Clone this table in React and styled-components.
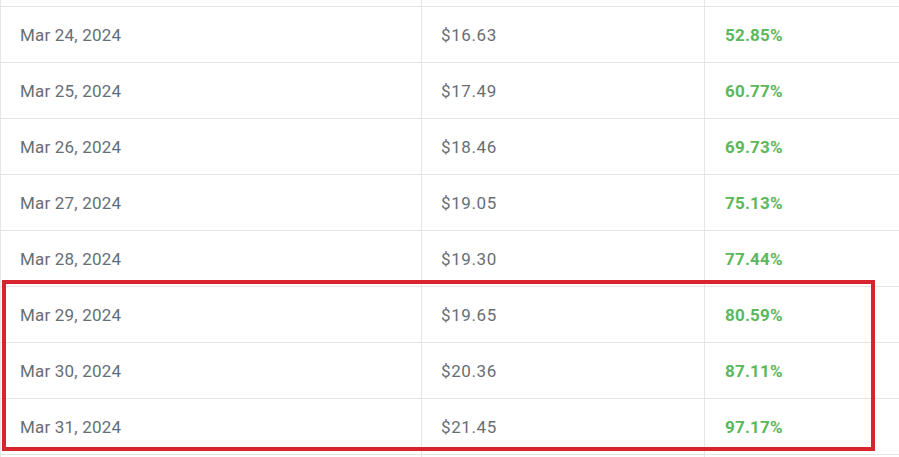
import React from "react";
import styled, { createGlobalStyle } from "styled-components";

const Global = createGlobalStyle`
  html, body { margin: 0; padding: 0; background: #fff; }
  body { font-family: Roboto, "Liberation Sans", Arial, sans-serif; }
`;

const Viewport = styled.div`
  position: relative;
  width: 899px;
  height: 457px;
  overflow: hidden;
  background: #fff;
`;

const Table = styled.div`
  display: flex;
  flex-direction: column;
  border-left: 1px solid #e6e6e6;
`;

const Row = styled.div`
  display: grid;
  grid-template-columns: 420px 283px 1fr;
  height: ${(p) => p.$h || 56}px;
  box-sizing: border-box;
  border-bottom: 1px solid #e4e4e4;
`;

const Cell = styled.div`
  display: flex;
  align-items: center;
  box-sizing: border-box;
  padding-left: ${(p) => (p.$first ? 19 : p.$green ? 20 : 19)}px;
  border-left: ${(p) => (p.$first ? "none" : "1px solid #e4e4e4")};
  font-size: 17px;
  letter-spacing: ${(p) => (p.$money ? "0.6px" : "0.2px")};
  color: ${(p) => (p.$green ? "#5cb85c" : "#676e75")};
  font-weight: ${(p) => (p.$green ? 700 : 400)};
  white-space: nowrap;
`;

const Highlight = styled.div`
  position: absolute;
  left: 2px;
  top: 280px;
  width: 873px;
  height: 171px;
  box-sizing: border-box;
  border: 4px solid #d8252d;
  pointer-events: none;
`;

const rows = [
  ["Mar 24, 2024", "$16.63", "52.85%"],
  ["Mar 25, 2024", "$17.49", "60.77%"],
  ["Mar 26, 2024", "$18.46", "69.73%"],
  ["Mar 27, 2024", "$19.05", "75.13%"],
  ["Mar 28, 2024", "$19.30", "77.44%"],
  ["Mar 29, 2024", "$19.65", "80.59%"],
  ["Mar 30, 2024", "$20.36", "87.11%"],
  ["Mar 31, 2024", "$21.45", "97.17%"],
];

export default function App() {
  return (
    <>
      <Global />
      <Viewport>
        <Table>
          <Row $h={7}>
            <Cell $first />
            <Cell />
            <Cell />
          </Row>
          {rows.map(([d, p, c]) => (
            <Row key={d}>
              <Cell $first>{d}</Cell>
              <Cell $money>{p}</Cell>
              <Cell $green>{c}</Cell>
            </Row>
          ))}
          <Row>
            <Cell $first />
            <Cell />
            <Cell />
          </Row>
        </Table>
        <Highlight />
      </Viewport>
    </>
  );
}
